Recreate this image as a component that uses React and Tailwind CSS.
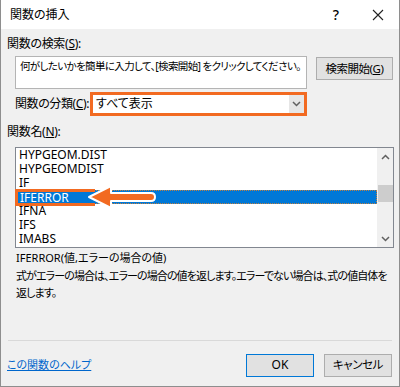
import React from 'react';

const functions = ['HYPGEOM.DIST', 'HYPGEOMDIST', 'IF', 'IFERROR', 'IFNA', 'IFS', 'IMABS'];

const jp = "font-['Noto_Sans','Noto_Sans_CJK_JP',sans-serif] [font-feature-settings:'palt']";

function Chevron({ up }) {
  return (
    <svg width="9" height="6" viewBox="0 0 9 6" className="block">
      <path d={up ? 'M1 5 L4.5 1.5 L8 5' : 'M1 1 L4.5 4.5 L8 1'} fill="none" stroke="#606060" strokeWidth="1.5" />
    </svg>
  );
}

export default function App() {
  return (
    <div className={`w-[400px] h-[387px] flex flex-col border-x border-b border-[#8e8e8e] text-[12px] text-black ${jp}`}>
      {/* title bar */}
      <div className="h-[29px] bg-white flex items-center pl-[9px] shrink-0">
        <span className="text-[12px] flex-1">関数の挿入</span>
        <span className="w-[20px] text-center text-[14px] font-medium mr-[26px]">?</span>
        <svg width="12" height="12" viewBox="0 0 12 12" className="mr-[15px]">
          <path d="M1 1 L11 11 M11 1 L1 11" stroke="#222" strokeWidth="1.1" />
        </svg>
      </div>

      {/* body */}
      <div className="flex-1 bg-[#f0f0f0] flex flex-col px-[6px] relative">
        <div className="h-[16px] mt-[7px] leading-[16px] tracking-[-0.3px]">関数の検索(<u>S</u>):</div>

        <div className="flex items-start mt-[4px] ml-[8px]">
          <div className="w-[292px] h-[33px] bg-white border border-[#b4b4b4] px-[4px] pt-[1px] leading-[16px] text-[10.5px] tracking-[-0.62px] whitespace-nowrap overflow-hidden">
            何がしたいかを簡単に入力して、[検索開始] をクリックしてください。
          </div>
          <div className="ml-[9px] w-[77px] h-[23px] mt-[1px] bg-[#e1e1e1] border border-[#adadad] flex items-center justify-center text-[11.5px] tracking-[-0.5px] whitespace-nowrap">
            検索開始(<u>G</u>)
          </div>
        </div>

        <div className="flex items-center mt-[3px] ml-[8px] h-[24px]">
          <span className="w-[75px] whitespace-nowrap tracking-[-0.4px]">関数の分類(<u>C</u>):</span>
          <div className="w-[217px] h-[24px] border-[3px] border-[#f26a21] bg-white flex items-center">
            <span className="flex-1 pl-[3px]">すべて表示</span>
            <div className="w-[15px] h-full bg-[#e6e6e6] flex items-center justify-center">
              <Chevron />
            </div>
          </div>
        </div>

        <div className="h-[16px] mt-[8px] leading-[16px] tracking-[-0.3px]">関数名(<u>N</u>):</div>

        <div className="ml-[8px] mt-[7px] w-[379px] h-[101px] border border-[#828790] bg-white flex">
          <div className="flex-1 flex flex-col pl-[1px]">
            {functions.map(name => (
              <div
                key={name}
                className={`h-[14px] leading-[14px] pl-[2px] text-[12px] font-['Noto_Sans',sans-serif] ${name === 'IFERROR' ? 'bg-[#0078d7] text-white border border-dotted border-[#c08040] leading-[12px]' : ''}`}
              >
                {name}
              </div>
            ))}
          </div>
          <div className="w-[16px] bg-[#f0f0f0] flex flex-col items-center">
            <div className="h-[17px] flex items-center"><Chevron up /></div>
            <div className="w-[15px] h-[17px] bg-[#cdcdcd] mt-[20px]" />
            <div className="flex-1" />
            <div className="h-[17px] flex items-center"><Chevron /></div>
          </div>
        </div>

        {/* annotation: orange box + arrow */}
        <div className="absolute left-[14px] top-[160px] w-[80px] h-[17px] border-[3px] border-[#f26a21] border-r-0" />
        <svg className="absolute left-[82px] top-[155px]" width="78" height="28" viewBox="0 0 78 28">
          <path d="M6 13 L28 2 L28 9 L68 9 Q72 9 72 13 Q72 17 68 17 L28 17 L28 24 Z" fill="#f26a21" stroke="#ffffff" strokeWidth="2" strokeLinejoin="round" />
        </svg>

        <div className="ml-[9px] mt-[1px] leading-[17px] text-[11px]">IFERROR(値,エラーの場合の値)</div>
        <div className="ml-[9px] mt-[1px] leading-[17px] text-[11px] tracking-[-0.9px] pr-[2px]">
          式がエラーの場合は、エラーの場合の値を返します。エラーでない場合は、式の値自体を返します。
        </div>

        <div className="flex-1" />
        <div className="h-px bg-[#d9d9d9] mx-[1px]" />

        <div className="flex items-center h-[45px] pt-[3px]">
          <span className="flex-1 text-[#0066cc] underline text-[11px]">この関数のヘルプ</span>
          <div className="w-[68px] h-[23px] bg-[#e1e1e1] border border-[#0078d7] flex items-center justify-center font-['Noto_Sans',sans-serif]">OK</div>
          <div className="ml-[10px] w-[68px] h-[23px] bg-[#e1e1e1] border border-[#adadad] flex items-center justify-center text-[11.5px] tracking-[-0.4px]">キャンセル</div>
          <div className="w-[1px]" />
        </div>
      </div>
    </div>
  );
}
